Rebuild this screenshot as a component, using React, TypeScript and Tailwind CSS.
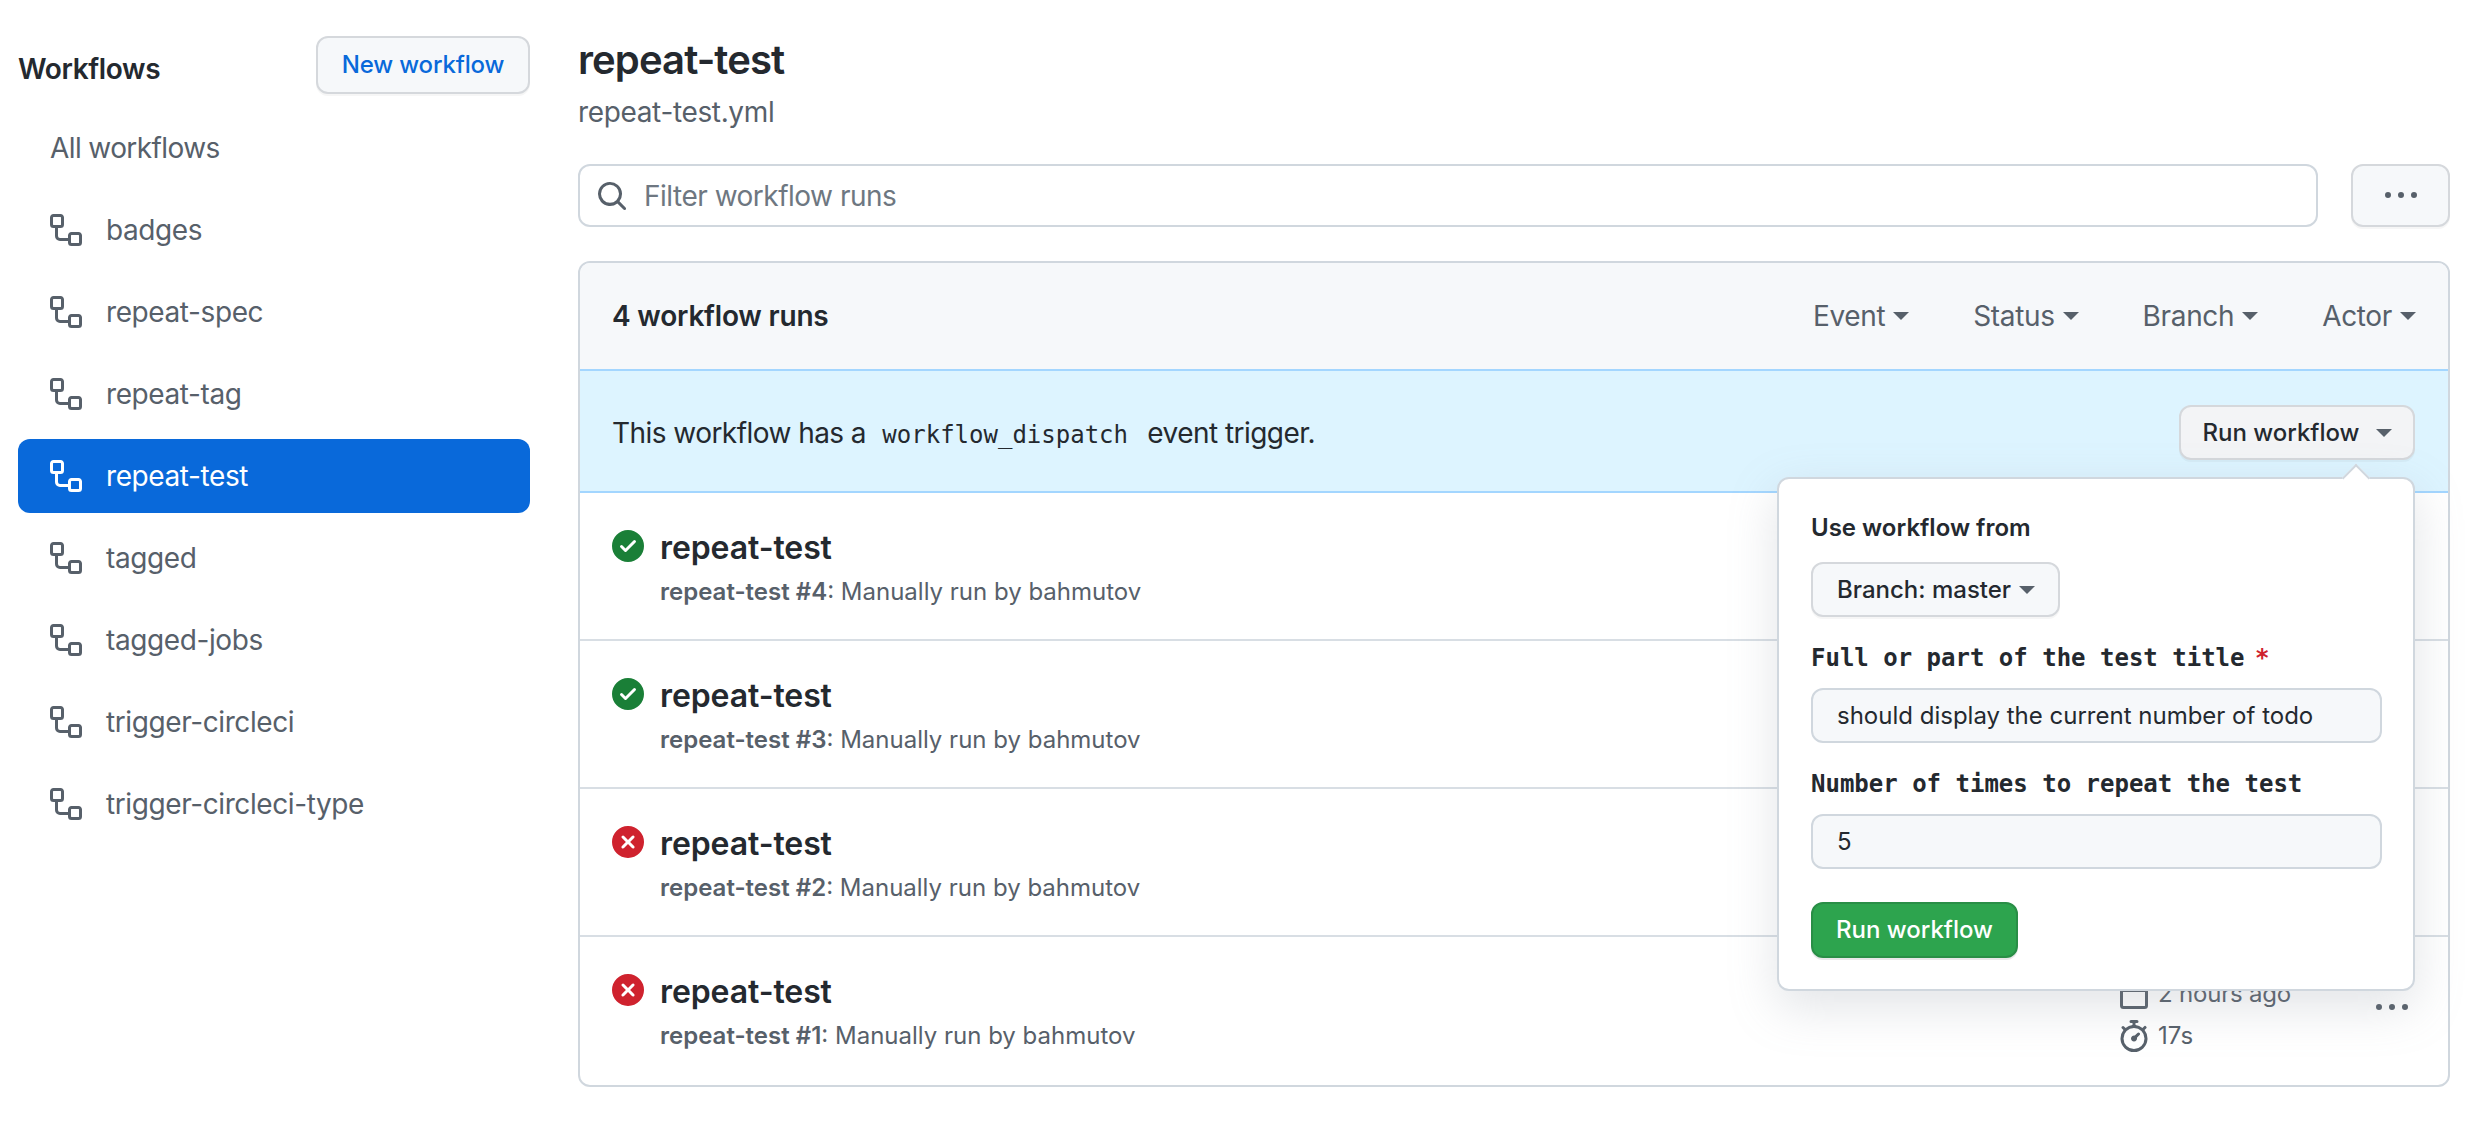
import React from 'react';

const workflowPath = "M0 1.75C0 .784.784 0 1.75 0h3.5C6.216 0 7 .784 7 1.75v3.5A1.75 1.75 0 0 1 5.25 7H4v4a1 1 0 0 0 1 1h4v-1.25C9 9.784 9.784 9 10.75 9h3.5c.966 0 1.75.784 1.75 1.75v3.5A1.75 1.75 0 0 1 14.25 16h-3.5A1.75 1.75 0 0 1 9 14.25v-.75H5A2.5 2.5 0 0 1 2.5 11V7h-.75A1.75 1.75 0 0 1 0 5.25Zm1.75-.25a.25.25 0 0 0-.25.25v3.5c0 .138.112.25.25.25h3.5a.25.25 0 0 0 .25-.25v-3.5a.25.25 0 0 0-.25-.25Zm9 9a.25.25 0 0 0-.25.25v3.5c0 .138.112.25.25.25h3.5a.25.25 0 0 0 .25-.25v-3.5a.25.25 0 0 0-.25-.25Z";
const searchPath = "M10.68 11.74a6 6 0 0 1-7.922-8.982 6 6 0 0 1 8.982 7.922l3.04 3.04a.749.749 0 0 1-.326 1.275.749.749 0 0 1-.734-.215ZM11.5 7a4.499 4.499 0 1 0-8.997 0A4.499 4.499 0 0 0 11.5 7Z";
const kebabPath = "M8 9a1.5 1.5 0 1 0 0-3 1.5 1.5 0 0 0 0 3ZM1.5 9a1.5 1.5 0 1 0 0-3 1.5 1.5 0 0 0 0 3Zm13 0a1.5 1.5 0 1 0 0-3 1.5 1.5 0 0 0 0 3Z";
const checkPath = "M8 16A8 8 0 1 1 8 0a8 8 0 0 1 0 16Zm3.78-9.72a.751.751 0 0 0-.018-1.042.751.751 0 0 0-1.042-.018L6.75 9.19 5.28 7.72a.751.751 0 0 0-1.042.018.751.751 0 0 0-.018 1.042l2 2a.75.75 0 0 0 1.06 0Z";
const failPath = "M2.343 13.657A8 8 0 1 1 13.658 2.343 8 8 0 0 1 2.343 13.657ZM6.03 4.97a.751.751 0 0 0-1.042.018.751.751 0 0 0-.018 1.042L6.94 8 4.97 9.97a.749.749 0 0 0 .326 1.275.749.749 0 0 0 .734-.215L8 9.06l1.97 1.97a.749.749 0 0 0 1.275-.326.749.749 0 0 0-.215-.734L9.06 8l1.97-1.97a.749.749 0 0 0-.326-1.275.749.749 0 0 0-.734.215L8 6.94Z";
const stopwatchPath = "M5.75.75A.75.75 0 0 1 6.5 0h3a.75.75 0 0 1 0 1.5h-.75v1l-.001.041a6.724 6.724 0 0 1 3.464 1.435l.007-.006.75-.75a.75.75 0 1 1 1.06 1.06l-.75.75-.006.007a6.75 6.75 0 1 1-10.548 0L2.72 5.03l-.75-.75a.751.751 0 0 1 .018-1.042.751.751 0 0 1 1.042-.018l.75.75.007.006A6.72 6.72 0 0 1 7.25 2.541V1.5H6.5a.75.75 0 0 1-.75-.75ZM8 14.5a5.25 5.25 0 1 0-.001-10.501A5.25 5.25 0 0 0 8 14.5Zm.389-6.7 1.33-1.33a.75.75 0 1 1 1.061 1.06L9.45 8.861A1.503 1.503 0 0 1 8 10.75a1.499 1.499 0 1 1 .389-2.95Z";
const calendarPath = "M4.75 0a.75.75 0 0 1 .75.75V2h5V.75a.75.75 0 0 1 1.5 0V2h1.25c.966 0 1.75.784 1.75 1.75v10.5A1.75 1.75 0 0 1 13.25 16H2.75A1.75 1.75 0 0 1 1 14.25V3.75C1 2.784 1.784 2 2.75 2H4V.75A.75.75 0 0 1 4.75 0ZM2.5 7.5v6.75c0 .138.112.25.25.25h10.5a.25.25 0 0 0 .25-.25V7.5Zm10.75-4H2.75a.25.25 0 0 0-.25.25V6h11V3.75a.25.25 0 0 0-.25-.25Z";

const Octicon = ({ d, className }: { d: string; className: string }) => (
    <svg viewBox="0 0 16 16" fill="currentColor" className={className}>
        <path d={d} />
    </svg>
);

const Caret = ({ className }: { className: string }) => (
    <span className={`inline-block w-0 h-0 border-x-[8px] border-x-transparent border-t-[8px] ${className}`} />
);

const workflows = ["badges", "repeat-spec", "repeat-tag", "repeat-test", "tagged", "tagged-jobs", "trigger-circleci", "trigger-circleci-type"];
const filters = ["Event", "Status", "Branch", "Actor"];
const runs = [
    { num: 4, ok: true, by: "Manually run by bahmutov" },
    { num: 3, ok: true, by: "Manually run by bahmutov" },
    { num: 2, ok: false, by: "Manually run by bahmutov" },
    { num: 1, ok: false, by: "Manually run by bahmutov" },
];

const Sidebar = () => (
    <aside className="w-[512px] shrink-0 pt-[36px]">
        <div className="flex items-center justify-between h-[58px] mb-[17px]">
            <h2 className="text-[28px] font-semibold tracking-[-0.35px] text-[#24292f] mt-[7px]">Workflows</h2>
            <button className="h-[58px] w-[214px] rounded-[12px] border-2 border-[#d5d8dc] bg-[#f6f8fa] text-[24px] font-medium tracking-[-0.15px] text-[#0969da] shadow-[0_2px_0_rgba(27,31,36,0.04)]">
                New workflow
            </button>
        </div>
        <nav className="flex flex-col gap-[8px] tracking-[-0.4px]">
            <div className="h-[74px] flex items-center pl-[32px] text-[28px] tracking-[-0.6px] text-[#57606a]">All workflows</div>
            {workflows.map((name) => {
                const active = name === "repeat-test";
                return (
                    <div
                        key={name}
                        className={`h-[74px] flex items-center pl-[32px] gap-[24px] rounded-[12px] text-[28px] ${active ? "bg-[#0969da] text-white" : "text-[#57606a]"}`}
                    >
                        <Octicon d={workflowPath} className="w-[32px] h-[32px] shrink-0" />
                        <span>{name}</span>
                    </div>
                );
            })}
        </nav>
    </aside>
);

const RunPopover = () => (
    <div className="absolute top-[72px] right-0 w-[638px] h-[514px] z-10 rounded-[12px] border-2 border-[#d0d7de] bg-white px-[32px] pt-[34px] shadow-[0_16px_48px_rgba(140,149,159,0.25)]">
        <div className="absolute -top-[11px] right-[47px] w-[20px] h-[20px] rotate-45 bg-white border-l-2 border-t-2 border-[#d0d7de]" />
        <div className="text-[24px] leading-[30px] font-semibold text-[#24292f]">Use workflow from</div>
        <button className="mt-[19px] h-[55px] w-[249px] flex items-center gap-[8px] pl-[24px] rounded-[12px] border-2 border-[#d5d8dc] bg-[#f6f8fa] text-[24px] font-medium text-[#24292f] shadow-[0_2px_0_rgba(27,31,36,0.04)]">
            Branch: master
            <Caret className="border-t-[#57606a]" />
        </button>
        <div className="mt-[26px] text-[24px] leading-[30px] font-bold text-[#24292f] font-['DejaVu_Sans_Mono',monospace]">
            Full or part of the test title <span className="text-[#cf222e] -ml-[4px]">*</span>
        </div>
        <input
            readOnly
            defaultValue="should display the current number of todo"
            className="mt-[15px] block w-[571px] h-[55px] pl-[24px] rounded-[12px] border-2 border-[#d0d7de] bg-[#f6f8fa] text-[24px] text-[#24292f] outline-none"
        />
        <div className="mt-[26px] text-[24px] leading-[30px] font-bold text-[#24292f] font-['DejaVu_Sans_Mono',monospace]">
            Number of times to repeat the test
        </div>
        <input
            readOnly
            defaultValue="5"
            className="mt-[15px] block w-[571px] h-[55px] pl-[24px] rounded-[12px] border-2 border-[#d0d7de] bg-[#f6f8fa] text-[24px] text-[#24292f] outline-none"
        />
        <button className="mt-[33px] h-[56px] w-[207px] rounded-[12px] border-2 border-[#298e46] bg-[#2da44e] text-[24px] font-medium text-white shadow-[0_2px_0_rgba(27,31,36,0.1)]">
            Run workflow
        </button>
    </div>
);

const RunRow = ({ num, ok, by, last }: { num: number; ok: boolean; by: string; last: boolean }) => (
    <div className={`relative flex h-[148px] pl-[32px] pr-[40px] pt-[35px] ${last ? "" : "border-b-2 border-[#d8dee4]"}`}>
        <Octicon d={ok ? checkPath : failPath} className={`w-[32px] h-[32px] shrink-0 mt-[2px] ${ok ? "text-[#1a7f37]" : "text-[#cf222e]"}`} />
        <div className="ml-[16px] flex-1">
            <div className="text-[32px] leading-[40px] font-semibold tracking-[-0.1px] text-[#24292f]">repeat-test</div>
            <div className="mt-[9px] text-[24px] leading-[30px] text-[#57606a]">
                <span className="font-semibold">repeat-test #{num}</span>: {by}
            </div>
        </div>
        {last && (
            <div className="flex items-start">
                <div className="w-[258px] text-[24px] leading-[30px] text-[#57606a]">
                    <div className="flex items-center gap-[8px] h-[41px]">
                        <Octicon d={calendarPath} className="w-[32px] h-[32px] shrink-0" />
                        <span className="tracking-[-0.2px] mt-[3px]">2 hours ago</span>
                    </div>
                    <div className="flex items-center gap-[8px] h-[41px] mt-[2px]">
                        <Octicon d={stopwatchPath} className="w-[32px] h-[32px] shrink-0" />
                        <span>17s</span>
                    </div>
                </div>
                <Octicon d={kebabPath} className="w-[32px] h-[32px] text-[#57606a] mt-[20px]" />
            </div>
        )}
    </div>
);

export default function App() {
    return (
        <div className="w-[2482px] h-[1148px] flex bg-white pl-[18px] pr-[32px] gap-[48px] overflow-hidden font-['Inter',sans-serif]">
            <Sidebar />
            <main className="flex-1 min-w-0 pt-[30px]">
                <h1 className="text-[40px] leading-[60px] font-semibold tracking-[-0.9px] text-[#24292f]">repeat-test</h1>
                <div className="text-[28px] leading-[42px] tracking-[-0.35px] text-[#57606a] mt-[1px]">repeat-test.yml</div>
                <div className="flex gap-[33px] mt-[31px]">
                    <div className="flex-1 h-[63px] flex items-center rounded-[12px] border-2 border-[#d0d7de] bg-white pl-[16px]">
                        <Octicon d={searchPath} className="w-[32px] h-[32px] text-[#57606a] shrink-0" />
                        <input
                            readOnly
                            placeholder="Filter workflow runs"
                            className="ml-[16px] flex-1 bg-transparent text-[28px] tracking-[-0.5px] text-[#24292f] placeholder:text-[#6e7781] outline-none"
                        />
                    </div>
                    <button className="w-[99px] h-[63px] flex items-center justify-center rounded-[12px] border-2 border-[#d5d8dc] bg-[#f6f8fa] text-[#57606a] shadow-[0_2px_0_rgba(27,31,36,0.04)]">
                        <Octicon d={kebabPath} className="w-[32px] h-[32px]" />
                    </button>
                </div>
                <section className="mt-[34px] rounded-[12px] border-2 border-[#d0d7de]">
                    <div className="h-[106px] flex items-center justify-between pl-[32px] pr-[32px] bg-[#f6f8fa] rounded-t-[10px]">
                        <div className="text-[28px] font-semibold tracking-[-0.2px] text-[#24292f]">4 workflow runs</div>
                        <div className="flex items-center gap-[64px]">
                            {filters.map((f) => (
                                <div key={f} className="flex items-center gap-[8px] text-[28px] tracking-[-0.35px] text-[#57606a]">
                                    {f}
                                    <Caret className="border-t-[#57606a]" />
                                </div>
                            ))}
                        </div>
                    </div>
                    <div className="h-[124px] flex items-center justify-between pl-[32px] pr-[33px] pt-[3px] bg-[#ddf4ff] border-y-2 border-[#a3d6ff]">
                        <div className="text-[28px] tracking-[-0.55px] text-[#24292f]">
                            This workflow has a <code className="font-['DejaVu_Sans_Mono',monospace] text-[24px] tracking-normal ml-[9px] mr-[12px]">workflow_dispatch</code> event trigger.
                        </div>
                        <div className="relative">
                            <button className="h-[55px] w-[236px] flex items-center justify-center gap-[16px] rounded-[12px] border-2 border-[#d5d8dc] bg-[#f3f4f6] text-[24px] font-medium text-[#24292f] shadow-[0_2px_0_rgba(27,31,36,0.04)]">
                                Run workflow
                                <Caret className="border-t-[#57606a]" />
                            </button>
                            <RunPopover />
                        </div>
                    </div>
                    {runs.map((r, i) => (
                        <RunRow key={r.num} num={r.num} ok={r.ok} by={r.by} last={i === runs.length - 1} />
                    ))}
                </section>
            </main>
        </div>
    );
}
